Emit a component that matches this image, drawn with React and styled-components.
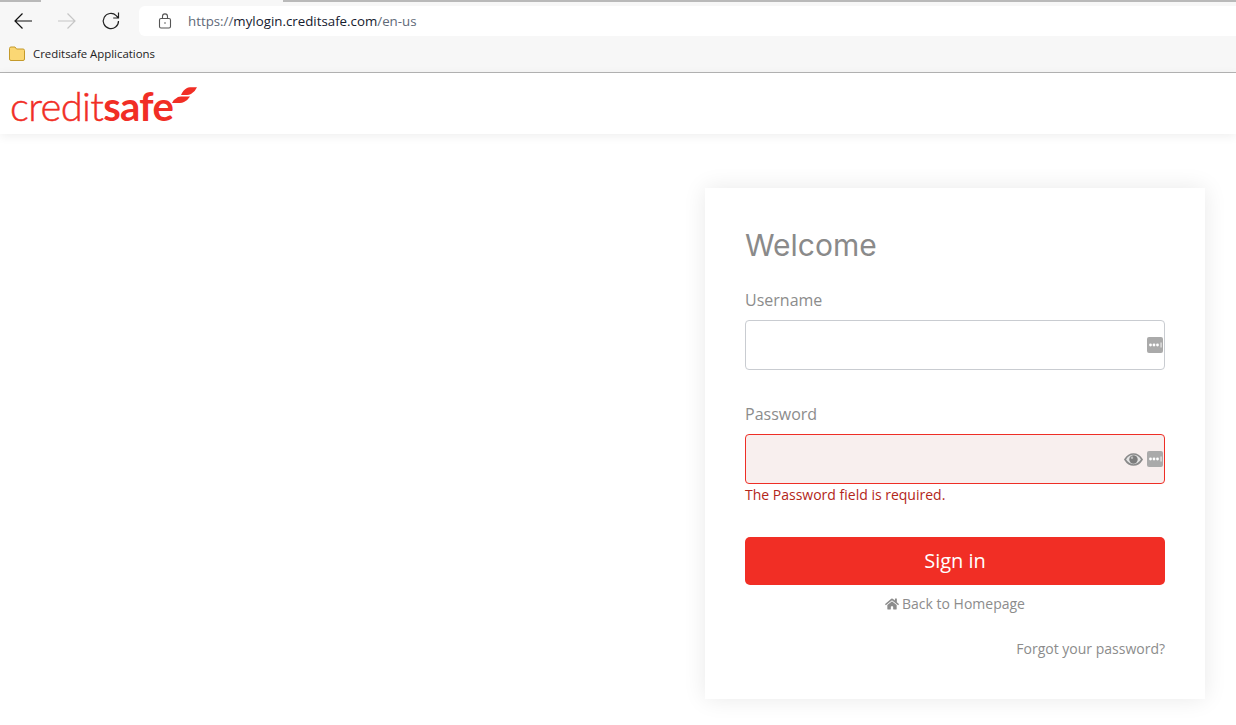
import React from "react";
import styled, { createGlobalStyle } from "styled-components";
import { FaHome } from "react-icons/fa";

const Global = createGlobalStyle`
  html, body { margin: 0; padding: 0; background: #fff; }
  body { font-family: "Open Sans", sans-serif; overflow: hidden; }
  * { box-sizing: border-box; }
`;
const Page = styled.div`
  width: 1236px; height: 725px; overflow: hidden; display: flex; flex-direction: column; background: #fff;
`;
const Browser = styled.div`
  height: 73px; flex: none; background: #f7f7f7; border-bottom: 1px solid #b4b4b4; display: flex; flex-direction: column;
`;
const TabStrip = styled.div`
  height: 3px; flex: none; display: flex; justify-content: space-between; background: #f7f7f7;
`;
const TabEdge = styled.div`
  height: 2px; width: ${p => p.$w}px; background: #b9b9b9;
`;
const Toolbar = styled.div`
  height: 30px; flex: none; display: flex; align-items: center; margin-top: 3px; padding-left: 12px;
`;
const NavIcon = styled.svg`
  width: 22px; height: 22px; flex: none; margin-right: ${p => p.$mr}px; fill: none; stroke: ${p => p.$c}; stroke-width: 1.2;
`;
const Address = styled.div`
  flex: 1; height: 30px; background: #fff; border-radius: 6px 0 0 6px; display: flex; align-items: center; padding-left: 19px; margin-left: 17px;
`;
const Lock = styled.svg`
  width: 14px; height: 16px; flex: none; margin-right: 16px; fill: none; stroke: #555; stroke-width: 1.1;
`;
const Url = styled.span`
  font: 13.3px "Open Sans", sans-serif; color: #5f6a78;
`;
const Host = styled.span`
  color: #15202e;
`;
const Bookmarks = styled.div`
  flex: 1; display: flex; align-items: center; padding-left: 9px; gap: 8px; padding-bottom: 1px;
`;
const Folder = styled.svg`
  width: 16px; height: 15px; flex: none;
`;
const BookmarkText = styled.span`
  font: 11.4px "Open Sans", sans-serif; color: #222;
`;
const Header = styled.header`
  height: 61px; flex: none; background: #fff; box-shadow: 0 2px 10px rgba(0,0,0,.07); display: flex; align-items: flex-start; padding: 11px 0 0 10px; position: relative; z-index: 1;
`;
const Logo = styled.div`
  display: flex; align-items: flex-start; color: #f12e25; font: 300 40px/44px "Lato", sans-serif; letter-spacing: -0.7px; -webkit-text-stroke: .45px #f12e25;
`;
const LogoBold = styled.span`
  font-weight: 700; -webkit-text-stroke: 0;
`;
const LogoMark = styled.svg`
  width: 27px; height: 17px; margin: 3px 0 0 -3px; flex: none; fill: #f12e25;
`;
const Main = styled.main`
  flex: 1; display: flex; justify-content: flex-end; padding: 54px 31px 0 0;
`;
const Card = styled.section`
  width: 500px; height: 511px; background: #fff; box-shadow: 0 0 22px rgba(0,0,0,.09); padding: 36px 40px 0; display: flex; flex-direction: column;
`;
const Title = styled.h1`
  margin: 0 0 23px; font: 400 30px/42px "Inter", sans-serif; color: #8a8a8a; letter-spacing: 0;
`;
const Label = styled.label`
  display: block; font: 400 16px/22px "Open Sans", sans-serif; color: #8c8c8c; margin-bottom: 9px;
`;
const Field = styled.div`
  height: 50px; border-radius: 4px; display: flex; align-items: center; justify-content: flex-end; gap: 4px; padding-right: 1px;
  border: 1px solid ${p => p.$error ? "#ee2e26" : "#c9ccd1"};
  background: ${p => p.$error ? "#f8efee" : "#fff"};
  margin-bottom: ${p => p.$mb}px;
`;
const ErrorText = styled.div`
  font: 400 14px/20px "Open Sans", sans-serif; color: #b3261a; margin: 1px 0 32px;
`;
const Eye = styled.svg`
  width: 19px; height: 13px; flex: none;
`;
const Manager = styled.svg`
  width: 16px; height: 16px; flex: none;
`;
const SignIn = styled.button`
  height: 48px; flex: none; border: 0; border-radius: 5px; background: #f12e25; color: #fff; font: 400 20px "Open Sans", sans-serif; padding: 0 0 2px;
`;
const Back = styled.a`
  margin-top: 9px; display: flex; justify-content: center; align-items: center; gap: 3px; font: 400 14px/20px "Open Sans", sans-serif; color: #8c8c8c;
`;
const Forgot = styled.a`
  margin-top: 25px; text-align: right; font: 400 14px/20px "Open Sans", sans-serif; color: #8c8c8c;
`;

const ManagerIcon = () => (
  <Manager viewBox="0 0 16 16">
    <rect width="16" height="16" rx="2" fill="#aaaaaa" />
    <circle cx="3.5" cy="8" r="1.4" fill="#fff" />
    <circle cx="7" cy="8" r="1.4" fill="#fff" />
    <circle cx="10.5" cy="8" r="1.4" fill="#fff" />
    <rect x="13.6" y="5.5" width=".9" height="5" fill="#fff" />
  </Manager>
);

export default function App() {
  return (
    <Page>
      <Global />
      <Browser>
        <TabStrip>
          <TabEdge $w={41} />
          <TabEdge $w={953} />
        </TabStrip>
        <Toolbar>
          <NavIcon $c="#111" $mr={22} viewBox="0 0 22 22"><path d="M20 11H3M10.500 3.500 3 11l7.500 7.500" /></NavIcon>
          <NavIcon $c="#c6c6c6" $mr={22} viewBox="0 0 22 22"><path d="M2 11h17M11.500 3.500 19 11l-7.500 7.500" /></NavIcon>
          <NavIcon $c="#222" $mr={0} viewBox="0 0 22 22"><path d="M18.500 11a7.600 7.600 0 1 1-2.300-5.400L18.500 8M18.500 2.600V8H13.200" /></NavIcon>
          <Address>
            <Lock viewBox="0 0 14 16"><rect x="1.500" y="5.500" width="11" height="9.500" rx="1.500" /><path d="M4.500 5.500V3.400a2.500 2.500 0 0 1 5 0v2.100" /><circle cx="7" cy="10" r=".8" fill="#555" stroke="none" /></Lock>
            <Url>https://<Host>mylogin.creditsafe.com</Host>/en-us</Url>
          </Address>
        </Toolbar>
        <Bookmarks>
          <Folder viewBox="0 0 16 15"><path d="M.5 3V13a1.500 1.500 0 0 0 1.500 1.500h12a1.500 1.500 0 0 0 1.500-1.500V4.500A1.500 1.500 0 0 0 14 3H7.500L6 1H2A1.500 1.500 0 0 0 .5 2.500Z" fill="#fbd774" stroke="#c49a2b" /></Folder>
          <BookmarkText>Creditsafe Applications</BookmarkText>
        </Bookmarks>
      </Browser>
      <Header>
        <Logo>
          credit<LogoBold>safe</LogoBold>
          <LogoMark viewBox="0 0 27 17">
            <path d="M11 8Q13 3 17 1 18 .3 20 .3H27Q25 5 21 7 19 8 17 8Z" />
            <path d="M2 16Q4 12 8 10 9 9.500 11 9.500H20Q18 13 14 15 12 16 10 16Z" />
          </LogoMark>
        </Logo>
      </Header>
      <Main>
        <Card>
          <Title>Welcome</Title>
          <Label>Username</Label>
          <Field $mb={33}><ManagerIcon /></Field>
          <Label>Password</Label>
          <Field $error $mb={0}>
            <Eye viewBox="0 0 19 13">
              <path d="M1 6.500C3.300 2.800 6 1 9.500 1s6.200 1.800 8.500 5.500C15.700 10.200 13 12 9.500 12S3.300 10.200 1 6.500Z" fill="#e4e4e4" stroke="#8a8a8a" strokeWidth="1.700" />
              <circle cx="9.500" cy="6.500" r="4.200" fill="#7d7d7d" />
              <circle cx="8" cy="4.800" r="1.200" fill="#bbb" />
            </Eye>
            <ManagerIcon />
          </Field>
          <ErrorText>The Password field is required.</ErrorText>
          <SignIn>Sign in</SignIn>
          <Back><FaHome size={14} />Back to Homepage</Back>
          <Forgot>Forgot your password?</Forgot>
        </Card>
      </Main>
    </Page>
  );
}
